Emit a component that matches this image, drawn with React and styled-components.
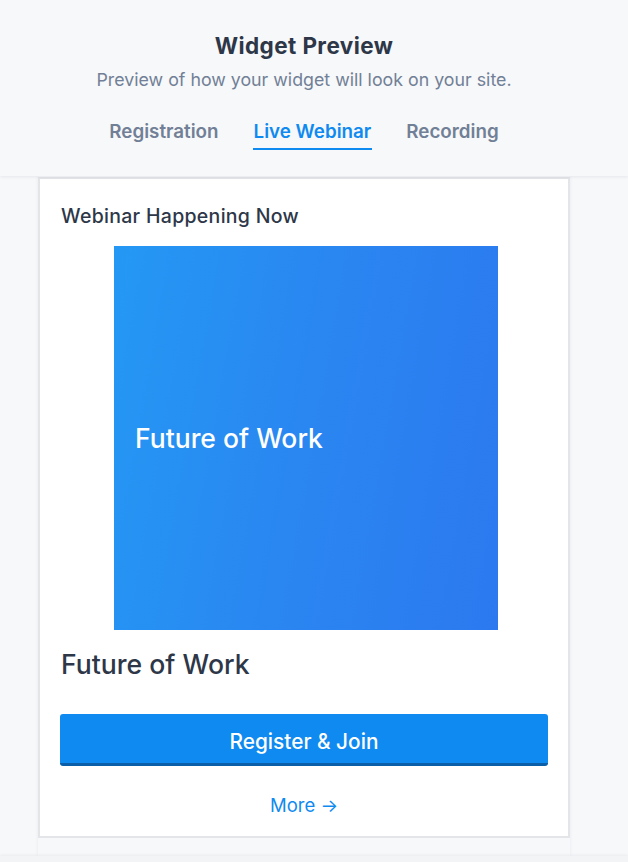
import React, { useState } from 'react';
import styled, { createGlobalStyle } from 'styled-components';

const textDark = '#2d3748';
const textMuted = '#718096';
const brandBlue = '#0f8af0';

const GlobalStyle = createGlobalStyle`
  html, body {
    margin: 0;
    padding: 0;
    background: #f7f8fa;
    font-family: Inter, "Open Sans", "Liberation Sans", sans-serif;
    -webkit-font-smoothing: antialiased;
  }
`;

const Page = styled.div`
  min-height: 862px;
  display: flex;
  flex-direction: column;
  background: #f7f8fa;
`;

const Header = styled.header`
  position: relative;
  z-index: 1;
  height: 176px;
  box-sizing: border-box;
  padding: 34px 20px 0 0;
  text-align: center;
  background: #f7f8fa;
  box-shadow: 0 1px 3px rgba(20, 30, 50, 0.08);
`;

const Title = styled.h1`
  margin: 0;
  font-size: 22.5px;
  letter-spacing: 0.4px;
  line-height: 24px;
  font-weight: 700;
  color: ${textDark};
`;

const Subtitle = styled.p`
  margin: 10px 0 0;
  font-size: 17.8px;
  line-height: 24px;
  color: ${textMuted};
`;

const Tabs = styled.nav`
  margin-top: 28px;
  display: flex;
  justify-content: center;
  gap: 33px;
`;

const Tab = styled.button`
  border: 0;
  background: none;
  padding: 0 1px 4px;
  font-family: inherit;
  font-size: 18.8px;
  line-height: 24px;
  font-weight: 600;
  color: ${({ $active }) => ($active ? brandBlue : textMuted)};
  border-bottom: 2px solid ${({ $active }) => ($active ? brandBlue : 'transparent')};
  cursor: pointer;
`;

const Stage = styled.main`
  width: 532px;
  margin-left: 38px;
  padding-bottom: 18px;
  background: #f7f8fa;
  box-shadow: 0 0 4px rgba(20, 30, 50, 0.06);
`;

const Card = styled.section`
  margin-top: 1px;
  background: #fff;
  border: 2px solid #e3e5e9;
  padding: 24px 20px 19px;
  display: flex;
  flex-direction: column;
`;

const CardLabel = styled.h2`
  margin: 0 0 0 1px;
  font-size: 19.5px;
  letter-spacing: 0.3px;
  line-height: 26px;
  font-weight: 500;
  color: ${textDark};
`;

const Cover = styled.div`
  margin: 17px 0 0 54px;
  width: 384px;
  height: 384px;
  display: flex;
  align-items: center;
  padding-left: 21px;
  box-sizing: border-box;
  background: linear-gradient(100deg, #2498f4 0%, #2a86f1 50%, #2c79ef 100%);
  color: #fff;
  font-size: 26.5px;
  font-weight: 500;
`;

const EventName = styled.h3`
  margin: 18px 0 0 1px;
  font-size: 26.6px;
  line-height: 32px;
  font-weight: 500;
  color: ${textDark};
`;

const PrimaryButton = styled.button`
  margin-top: 34px;
  height: 52px;
  padding: 5px 0 0;
  border: 0;
  border-bottom: 3px solid #0a5fa8;
  border-radius: 3px;
  background: ${brandBlue};
  color: #fff;
  font-family: inherit;
  font-size: 20.8px;
  font-weight: 500;
  cursor: pointer;
`;

const MoreLink = styled.a`
  margin-top: 27px;
  align-self: center;
  font-size: 18.5px;
  line-height: 24px;
  color: ${brandBlue};
  text-decoration: none;
`;

const Footer = styled.div`
  flex: 1;
  background: #f3f4f6;
  box-shadow: 0 -1px 3px rgba(20, 30, 50, 0.06);
`;

const tabs = ['Registration', 'Live Webinar', 'Recording'];

const App = () => {
  const [active, setActive] = useState('Live Webinar');

  return (
    <Page>
      <GlobalStyle />
      <Header>
        <Title>Widget Preview</Title>
        <Subtitle>Preview of how your widget will look on your site.</Subtitle>
        <Tabs>
          {tabs.map(t => (
            <Tab key={t} $active={t === active} onClick={() => setActive(t)} type="button">{t}</Tab>
          ))}
        </Tabs>
      </Header>
      <Stage>
        <Card>
          <CardLabel>Webinar Happening Now</CardLabel>
          <Cover>Future of Work</Cover>
          <EventName>Future of Work</EventName>
          <PrimaryButton type="button">Register &amp; Join</PrimaryButton>
          <MoreLink href="#">More →</MoreLink>
        </Card>
      </Stage>
      <Footer />
    </Page>
  );
};

export default App;
